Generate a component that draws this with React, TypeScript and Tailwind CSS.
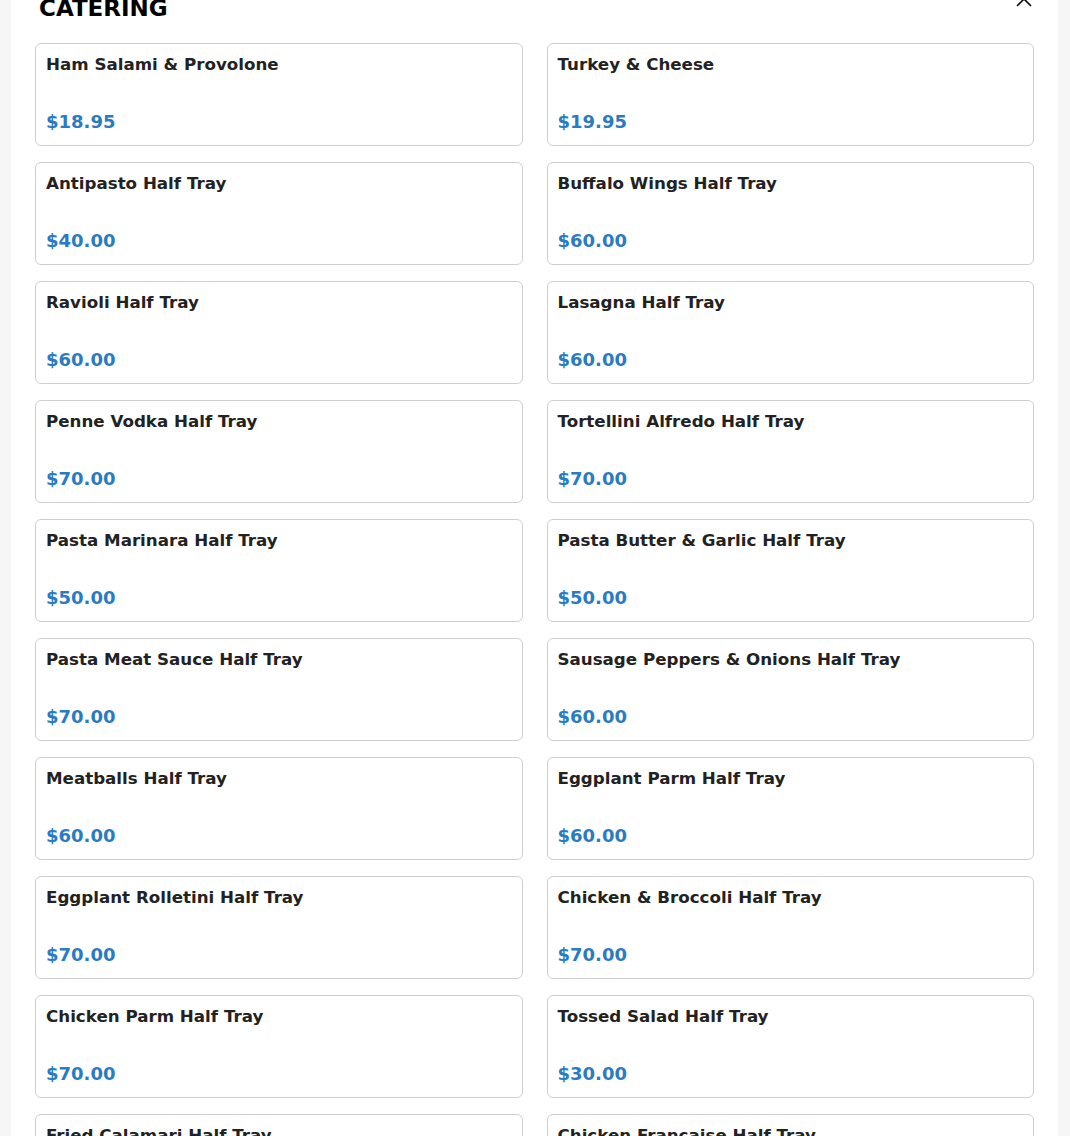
import React from "react";

type CateringItem = {
  name: string;
  price: string;
};

const ITEMS: CateringItem[] = [
  { name: "Ham Salami & Provolone", price: "$18.95" },
  { name: "Turkey & Cheese", price: "$19.95" },
  { name: "Antipasto Half Tray", price: "$40.00" },
  { name: "Buffalo Wings Half Tray", price: "$60.00" },
  { name: "Ravioli Half Tray", price: "$60.00" },
  { name: "Lasagna Half Tray", price: "$60.00" },
  { name: "Penne Vodka Half Tray", price: "$70.00" },
  { name: "Tortellini Alfredo Half Tray", price: "$70.00" },
  { name: "Pasta Marinara Half Tray", price: "$50.00" },
  { name: "Pasta Butter & Garlic Half Tray", price: "$50.00" },
  { name: "Pasta Meat Sauce Half Tray", price: "$70.00" },
  { name: "Sausage Peppers & Onions Half Tray", price: "$60.00" },
  { name: "Meatballs Half Tray", price: "$60.00" },
  { name: "Eggplant Parm Half Tray", price: "$60.00" },
  { name: "Eggplant Rolletini Half Tray", price: "$70.00" },
  { name: "Chicken & Broccoli Half Tray", price: "$70.00" },
  { name: "Chicken Parm Half Tray", price: "$70.00" },
  { name: "Tossed Salad Half Tray", price: "$30.00" },
  { name: "Fried Calamari Half Tray", price: "$60.00" },
  { name: "Chicken Francaise Half Tray", price: "$70.00" },
];

function ItemCard({ item }: { item: CateringItem }) {
  return (
    <div className="h-[103px] rounded-md border border-[#cfcfcf] bg-white px-[10px] pt-[11px] pb-[13px] flex flex-col justify-between">
      <p className="text-[16.7px] font-bold text-[#222222] leading-[19.5px]">{item.name}</p>
      <p className="text-[18px] font-bold text-[#2a7bc2] leading-[21px]">{item.price}</p>
    </div>
  );
}

export default function App() {
  return (
    <div
      className="min-h-screen bg-[#f6f6f6] pl-[11px] pr-[12px] overflow-hidden"
      style={{ fontFamily: '"DejaVu Sans", "Liberation Sans", sans-serif' }}
    >
      <div className="-mt-[29px] bg-white pt-6 pl-6 pr-[24px] pb-6 h-[1300px]">
        <div className="flex items-start justify-between pl-1 pr-[2px]">
          <h2 className="text-[23px] font-bold uppercase text-black leading-[26px]">Catering</h2>
          <button className="-mt-[4px] text-black" aria-label="Close">
            <svg width="16" height="16" viewBox="0 0 16 16" fill="none" stroke="currentColor" strokeWidth="1.6" strokeLinecap="round">
              <path d="M1.5 1.5 L14.5 14.5" />
              <path d="M14.5 1.5 L1.5 14.5" />
            </svg>
          </button>
        </div>

        <div className="mt-[22px] grid grid-cols-2 gap-x-6 gap-y-4">
          {ITEMS.map((item) => (
            <ItemCard key={item.name} item={item} />
          ))}
        </div>
      </div>
    </div>
  );
}
